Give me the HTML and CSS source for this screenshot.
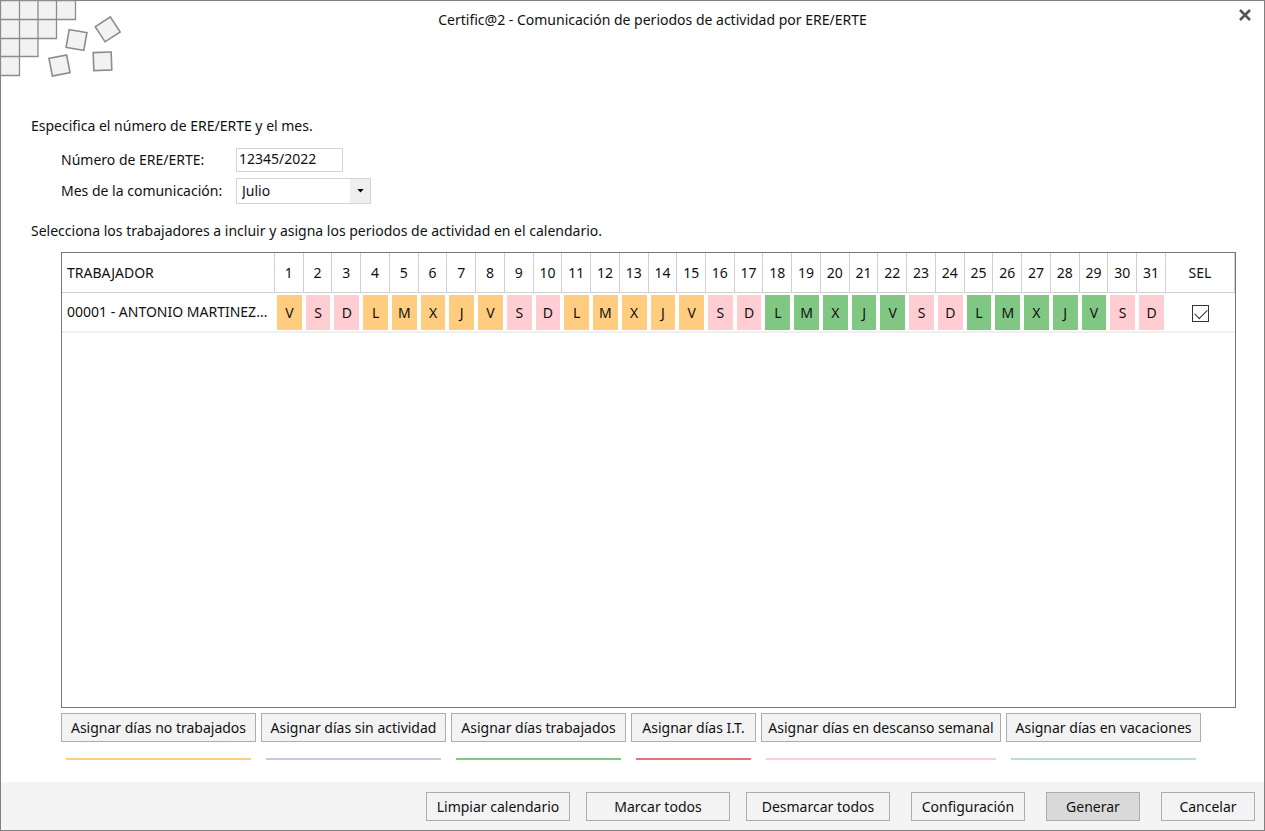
FILE: index.html
```html
<!DOCTYPE html>
<html lang="es">
<head>
<meta charset="utf-8">
<meta name="viewport" content="width=device-width, initial-scale=1">
<title>Certific@2 - Comunicación de periodos de actividad por ERE/ERTE</title>
<link rel="stylesheet" href="styles.css">
</head>
<body>
<div class="dialog">
  <header class="titlebar">
    <svg class="brand" viewBox="0 0 130 84" aria-hidden="true">
      <g fill="#f2f2f2" stroke="#8c8c8c" stroke-width="1.3">
        <path d="M.5.5H75.500V19.500H56.500V38.500H38V56.500H19.500V75.500H.5Z"/>
        <path d="M19.500.5V56.500M38 .5V38.500M56.500.5V19.500M.5 19.500H56.500M.5 38.500H38M.5 56.500H19.500" fill="none"/>
        <g stroke-width="1.600">
          <rect x="-9" y="-9" width="18" height="18" transform="translate(76.500 40) rotate(10)"/>
          <rect x="-9" y="-9" width="18" height="18" transform="translate(107.700 29.300) rotate(-33)"/>
          <rect x="-9" y="-9" width="18" height="18" transform="translate(59.500 65.500) rotate(-11)"/>
          <rect x="-9" y="-9" width="18" height="18" transform="translate(102.500 61.300) rotate(-2)"/>
        </g>
      </g>
    </svg>
    <h1 class="title">Certific@2 - Comunicación de periodos de actividad por ERE/ERTE</h1>
    <button class="close" type="button" aria-label="Cerrar">
      <svg viewBox="0 0 12 12" aria-hidden="true"><path d="M1 1L11 11M11 1L1 11" stroke="#555" stroke-width="2.600" fill="none"/></svg>
    </button>
  </header>

  <main class="content">
    <p class="hint">Especifica el número de ERE/ERTE y el mes.</p>
    <div class="form">
      <label for="numero">Número de ERE/ERTE:</label>
      <input class="field number" id="numero" type="text" value="12345/2022">
      <label for="mes">Mes de la comunicación:</label>
      <div class="combo">
        <select class="field month" id="mes"><option>Julio</option></select>
        <span class="arrow"><svg viewBox="0 0 8 5" aria-hidden="true"><path d="M0 0H8L4 4.500Z" fill="#000"/></svg></span>
      </div>
    </div>
    <p class="hint">Selecciona los trabajadores a incluir y asigna los periodos de actividad en el calendario.</p>

    <div class="grid">
      <table class="calendar">
        <colgroup><col class="col-worker"><col span="31"><col class="col-sel"></colgroup>
        <thead>
          <tr id="days"><th class="worker" scope="col">TRABAJADOR</th><th scope="col">SEL</th></tr>
        </thead>
        <tbody>
          <tr id="row"><td class="worker">00001 - ANTONIO MARTINEZ...</td><td class="sel"><input class="check" type="checkbox" checked aria-label="Seleccionar a 00001 - ANTONIO MARTINEZ"></td></tr>
        </tbody>
      </table>
    </div>

    <div class="assign">
      <div class="choice w-195"><button class="btn" type="button">Asignar días no trabajados</button><span class="key idle"></span></div>
      <div class="choice w-185"><button class="btn" type="button">Asignar días sin actividad</button><span class="key inactive"></span></div>
      <div class="choice w-175"><button class="btn" type="button">Asignar días trabajados</button><span class="key worked"></span></div>
      <div class="choice w-125"><button class="btn" type="button">Asignar días I.T.</button><span class="key sick"></span></div>
      <div class="choice w-240"><button class="btn" type="button">Asignar días en descanso semanal</button><span class="key rest"></span></div>
      <div class="choice w-195"><button class="btn" type="button">Asignar días en vacaciones</button><span class="key holiday"></span></div>
    </div>
  </main>

  <footer class="actions">
    <button class="btn w-144" type="button">Limpiar calendario</button>
    <button class="btn w-144" type="button">Marcar todos</button>
    <button class="btn w-144" type="button">Desmarcar todos</button>
    <button class="btn w-114" type="button">Configuración</button>
    <button class="btn w-94 primary" type="button">Generar</button>
    <button class="btn w-94" type="button">Cancelar</button>
  </footer>
</div>
<script src="calendar.js"></script>
</body>
</html>
```
FILE: styles.css
```css
* { box-sizing: border-box; }

body {
  margin: 0;
  font: 14px/20px "Noto Sans", "Open Sans", sans-serif;
  color: #111;
  background: #fff;
}

button, input, select { font: inherit; color: inherit; }

.dialog {
  display: flex;
  flex-direction: column;
  min-height: 100vh;
  border: 1px solid #808080;
}

.titlebar {
  display: grid;
  grid-template-columns: 130px 1fr 90px;
  align-items: start;
  height: 115px;
}

.brand { width: 130px; height: 84px; margin: -1px; }

.title {
  margin: 8px 0 0;
  font-size: 14px;
  line-height: 22px;
  font-weight: 400;
  text-align: center;
}

.close {
  justify-self: end;
  display: grid;
  place-items: center;
  width: 26px;
  height: 24px;
  margin: 2px 6px 0 0;
  padding: 0;
  border: 0;
  background: none;
}

.close svg { width: 12px; height: 12px; }

.content {
  flex: 1;
  display: flex;
  flex-direction: column;
  padding: 0 28px 22px 30px;
}

.hint { margin: 0; }

.form {
  display: grid;
  grid-template-columns: 169px max-content;
  gap: 6px;
  align-items: center;
  margin: 12px 0 17px 30px;
}

.field {
  display: block;
  border: 1px solid #d4d4d4;
  border-radius: 0;
  background: #fff;
}

.number { width: 107px; height: 24px; padding: 0 2px 3px; }

.combo { position: relative; width: 135px; }

.month { width: 100%; height: 26px; padding: 0 5px; appearance: none; }

.arrow {
  position: absolute;
  inset: 1px 1px 1px auto;
  width: 20px;
  display: grid;
  place-items: center;
  background: #efefef;
  pointer-events: none;
}

.arrow svg { width: 7px; height: 4px; }

.grid {
  flex: 1;
  margin: 11px 0 5px 30px;
  border: 1px solid #777;
}

.calendar {
  width: 100%;
  table-layout: fixed;
  border-collapse: separate;
  border-spacing: 0;
}

.col-worker { width: 213px; }
.col-sel { width: 69px; }

.calendar th, .calendar td {
  height: 40px;
  padding: 0;
  font-weight: 400;
  text-align: center;
}

.calendar th {
  border-right: 1px solid #d0d0d0;
  border-bottom: 1px solid #d0d0d0;
}

.calendar td { border-bottom: 2px solid #f0f0f0; }

.calendar .worker {
  padding: 0 5px;
  text-align: left;
  white-space: nowrap;
}

.day {
  display: block;
  height: 35px;
  margin: 0 2px;
  line-height: 35px;
}

.idle { background: #ffcc80; }
.inactive { background: #d1c4e9; }
.worked { background: #81c784; }
.sick { background: #e57373; }
.rest { background: #ffcdd2; }
.holiday { background: #b2dfdb; }

.check {
  appearance: none;
  display: inline-block;
  width: 17px;
  height: 17px;
  margin: 0;
  border: 1px solid #333;
  background: #fff;
  vertical-align: middle;
}

.check:checked::after {
  content: "";
  display: block;
  width: 11px;
  height: 6px;
  margin: 3px 2px;
  border: solid #333;
  border-width: 0 0 1px 1px;
  transform: rotate(-45deg);
}

.assign { display: flex; flex-wrap: wrap; gap: 5px; margin-left: 30px; }

.choice { display: flex; flex-direction: column; gap: 16px; }

.key { height: 2px; margin: 0 5px; }

.btn {
  height: 29px;
  padding: 0 4px;
  border: 1px solid #adadad;
  border-radius: 0;
  background: #f3f3f3;
  white-space: nowrap;
}

.primary { background: #d9d9d9; }

.w-94 { width: 94px; }
.w-114 { width: 114px; }
.w-125 { width: 125px; }
.w-144 { width: 144px; }
.w-175 { width: 175px; }
.w-185 { width: 185px; }
.w-195 { width: 195px; }
.w-240 { width: 240px; }

.actions {
  display: flex;
  justify-content: flex-end;
  flex-wrap: wrap;
  column-gap: 16px;
  padding: 10px 9px 9px;
  background: #f4f4f4;
}

.actions .w-114, .actions .w-94 { margin-left: 5px; }
```
FILE: calendar.js
```js
const letters = "VSDLMXJ";
const header = document.getElementById("days");
const row = document.getElementById("row");

for (let day = 1; day <= 31; day++) {
  const th = document.createElement("th");
  th.scope = "col";
  th.textContent = day;
  header.insertBefore(th, header.lastElementChild);

  const letter = letters[(day - 1) % 7];
  const state = letter === "S" || letter === "D" ? "rest" : day < 16 ? "idle" : "worked";
  const td = document.createElement("td");
  const mark = document.createElement("span");
  mark.className = "day " + state;
  mark.textContent = letter;
  td.append(mark);
  row.insertBefore(td, row.lastElementChild);
}
```
